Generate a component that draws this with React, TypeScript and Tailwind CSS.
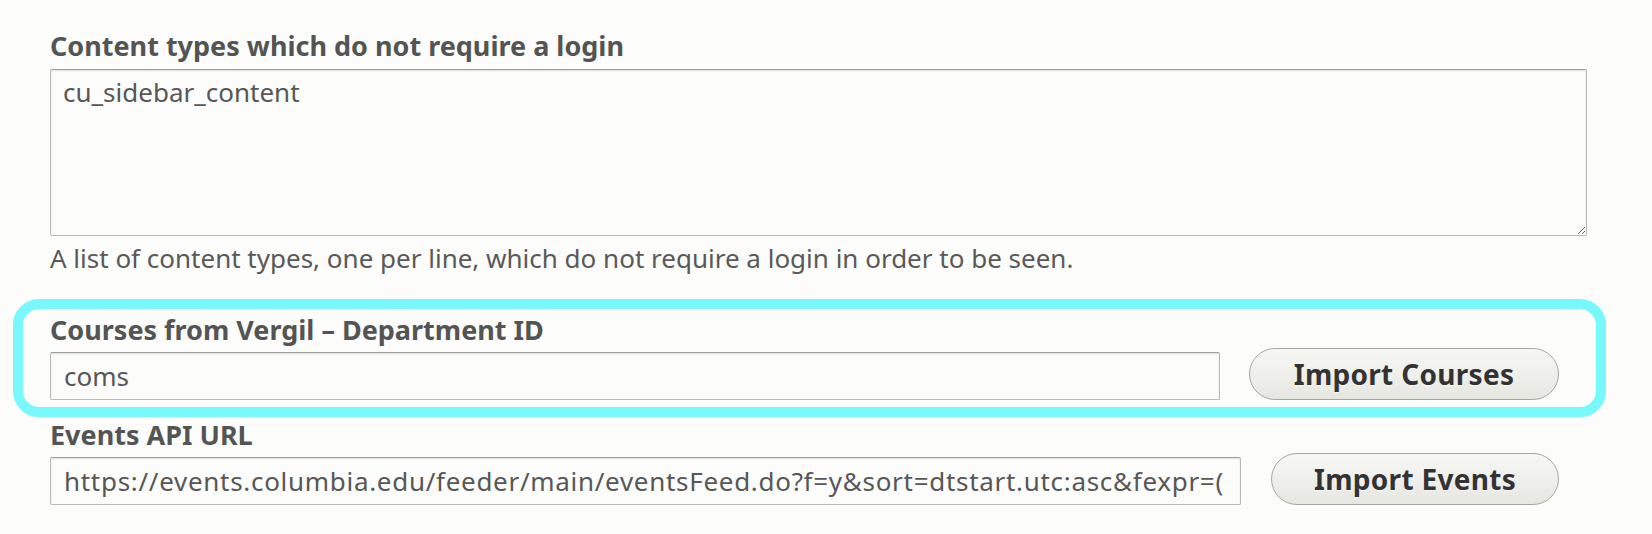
import React from 'react';

const fieldBase =
  'block rounded-[2px] border border-[#b9b9b9] border-t-[#9d9d9d] bg-[#fcfcfa] text-[26px] text-[#575757] shadow-[inset_0_1px_2px_rgba(0,0,0,0.12)] outline-none';

const buttonBase =
  'h-[52px] shrink-0 rounded-full border border-[#a6a6a6] bg-gradient-to-b from-[#f7f7f4] to-[#e7e7e2] text-center text-[28px] leading-[36px] font-bold tracking-[0.3px] text-[#333] [text-shadow:0_1px_0_rgba(255,255,255,0.7)]';

const labelBase = 'block text-[27px] leading-[28px] font-bold text-[#545454]';

export default function App() {
  return (
    <div className="min-h-screen bg-[#fcfcfa] pl-[50px] pt-[32px] font-['Noto_Sans',sans-serif]">
      <div className="w-[1537px]">
        {/* content types */}
        <label htmlFor="public_types" className={labelBase}>
          Content types which do not require a login
        </label>
        <textarea
          id="public_types"
          readOnly
          value="cu_sidebar_content"
          className={`${fieldBase} mt-[9px] h-[167px] w-full pl-[12px] pt-[8px] leading-[28px]`}
        />
        <p className="mt-[8px] text-[26px] leading-[28px] text-[#595959]">
          A list of content types, one per line, which do not require a login in order to be seen.
        </p>

        {/* highlighted row */}
        <div className="mt-[27px] -ml-[37px] w-[1593px] rounded-[26px] border-[10px] border-[#77f9fc] pb-[7px] pl-[27px] pt-[7px]">
          <label htmlFor="vergil_dept" className={labelBase}>
            Courses from Vergil – Department ID
          </label>
          <div className="mt-[4px] flex items-end">
            <input
              id="vergil_dept"
              readOnly
              value="coms"
              className={`${fieldBase} h-[48px] w-[1170px] py-[5px] pl-[13px] pr-[12px] leading-[36px]`}
            />
            <button type="button" className={`${buttonBase} ml-[29px] w-[310px]`}>
              Import Courses
            </button>
          </div>
        </div>

        {/* events */}
        <label htmlFor="events_url" className={`${labelBase} mt-[4px]`}>
          Events API URL
        </label>
        <div className="mt-[4px] flex items-end">
          <input
            id="events_url"
            readOnly
            value="https://events.columbia.edu/feeder/main/eventsFeed.do?f=y&sort=dtstart.utc:asc&fexpr=("
            className={`${fieldBase} h-[48px] w-[1191px] py-[5px] pl-[13px] pr-[12px] leading-[36px] tracking-[0.7px]`}
          />
          <button type="button" className={`${buttonBase} ml-[30px] w-[288px]`}>
            Import Events
          </button>
        </div>
      </div>
    </div>
  );
}
